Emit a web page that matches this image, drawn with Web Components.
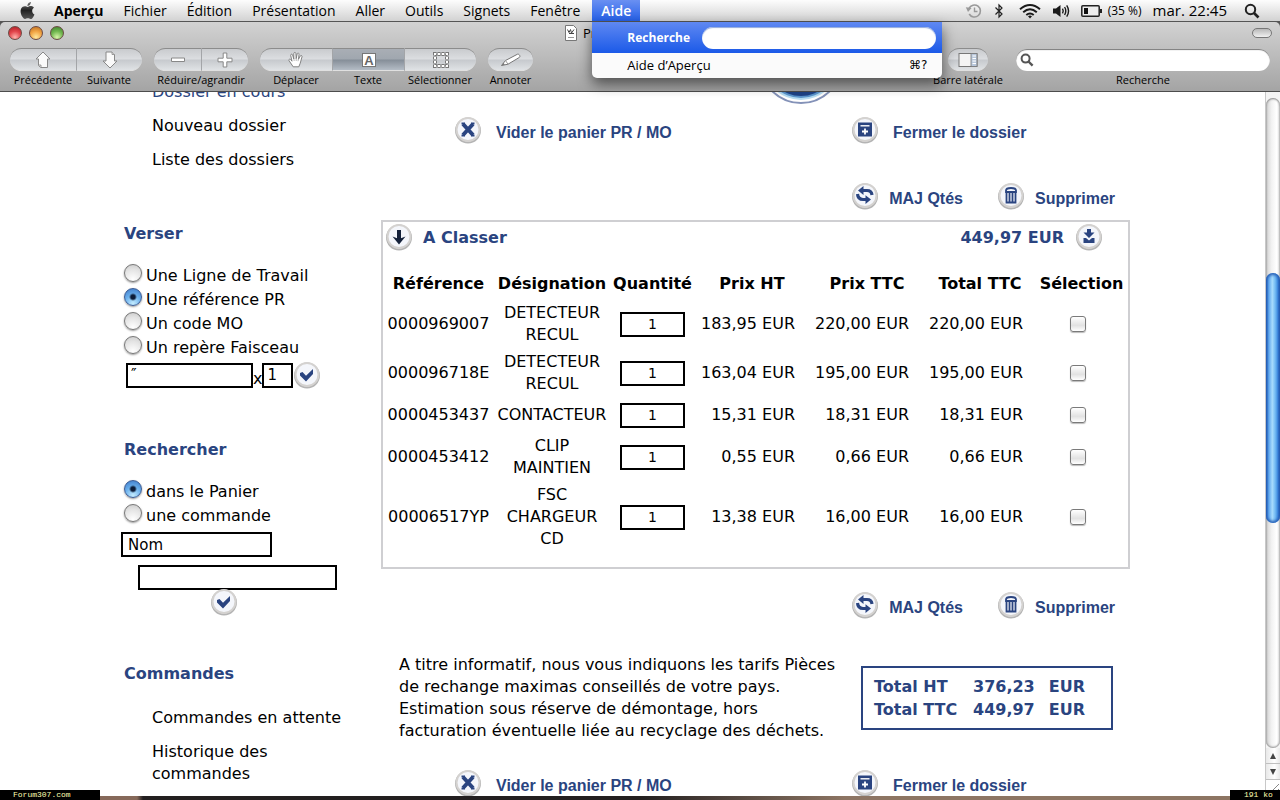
<!DOCTYPE html>
<html lang="fr">
<head>
<meta charset="utf-8">
<meta name="viewport" content="width=device-width, initial-scale=1">
<title>Aperçu</title>
<style>
  html, body { height: 100%; margin: 0; }

  body {
    --navy: #2a4480;
    --ui: "Open Sans", "Noto Sans", sans-serif;
    --text: "DejaVu Sans", sans-serif;
    background: #ffffff;
    color: #000000;
    font-family: var( --text );
    overflow: hidden;
  }
</style>
</head>
<body>
<preview-app></preview-app>

<script>
  // Name: [viewBox width, viewBox height, markup]
  const ICONS = {
    apple: [24, 24, `<defs><linearGradient id="g" x1="0" y1="0" x2="0" y2="1"><stop offset="0" stop-color="#777"/><stop offset=".5" stop-color="#222"/><stop offset="1" stop-color="#555"/></linearGradient></defs><path fill="url(#g)" d="M12.152 6.896c-.948 0-2.415-1.078-3.96-1.04-2.04.027-3.91 1.183-4.961 3.014-2.117 3.675-.546 9.103 1.519 12.09 1.013 1.454 2.208 3.09 3.792 3.039 1.52-.065 2.09-.987 3.935-.987 1.831 0 2.35.987 3.96.948 1.637-.026 2.676-1.48 3.676-2.948 1.156-1.688 1.636-3.325 1.662-3.415-.039-.013-3.182-1.221-3.22-4.857-.026-3.04 2.48-4.494 2.597-4.559-1.429-2.09-3.623-2.324-4.39-2.376-2-.156-3.675 1.09-4.61 1.09zM15.53 3.83c.843-1.012 1.4-2.427 1.245-3.83-1.207.052-2.662.805-3.532 1.818-.78.896-1.454 2.338-1.273 3.714 1.338.104 2.715-.688 3.559-1.701"/>`],
    history: [18, 16, `<path fill="none" stroke="#999" stroke-width="1.6" d="M4 5.4A6 6 0 1 1 4.2 11"/><path fill="#999" d="M.8 4.2 6.6 5 3 9z"/><path fill="none" stroke="#999" stroke-width="1.4" d="M9.5 4.5V8.5H12.5"/>`],
    bluetooth: [10, 16, `<path fill="none" stroke="#222" stroke-width="1.2" d="M1.5 4.5 8 11 5 14V2L8 5 1.5 11.5"/>`],
    wifi: [22, 16, `<g fill="none" stroke="#1a1a1a" stroke-width="2"><path d="M1 6.2Q11-2.2 21 6.2"/><path d="M4.2 9.2Q11 3.4 17.8 9.2"/><path d="M7.3 12Q11 9 14.7 12"/></g><path fill="#1a1a1a" d="M9 13.2Q11 11.6 13 13.2L11 15.6z"/>`],
    volume: [18, 16, `<path fill="#1a1a1a" d="M1 5.5H4L8.5 2V14L4 10.5H1z"/><g fill="none" stroke="#1a1a1a" stroke-width="1.4"><path d="M10.5 5.6Q12 8 10.5 10.4"/><path d="M12.6 4Q15 8 12.6 12"/><path d="M14.7 2.4Q18.4 8 14.7 13.6"/></g>`],
    battery: [22, 12, `<rect x=".8" y=".8" width="17.4" height="10.4" rx="1" fill="#eee" stroke="#222" stroke-width="1.5"/><rect x="3" y="3" width="4" height="6" fill="#111"/><path fill="#222" d="M19 4H21V8H19z"/>`],
    spotlight: [16, 16, `<circle cx="6.5" cy="6.5" r="4.7" fill="none" stroke="#222" stroke-width="2"/><path stroke="#222" stroke-width="2.6" d="M10 10 14.5 14.5"/>`],
    search: [14, 14, `<circle cx="5.6" cy="5.6" r="4" fill="none" stroke="#555" stroke-width="2"/><path stroke="#555" stroke-width="2.4" d="M8.5 8.5 12.6 12.6"/>`],
    previous: [18, 18, `<path fill="#fafafa" stroke="#888" d="M9 1 16 8H13.5V16.5H6.5L4.5 14.5V8H2z"/><path fill="#ddd" stroke="#888" stroke-width=".8" d="M4.5 14H7V16.5"/>`],
    next: [18, 18, `<path fill="#fafafa" stroke="#888" d="M5 1H11L13.5 3.5V10H16L9 17 2 10H5z"/><path fill="#ddd" stroke="#888" stroke-width=".8" d="M11 1V3.5H13.5"/>`],
    minus: [18, 18, `<path fill="#fff" stroke="#888" d="M2.5 7H15.5V10.5H2.5z"/>`],
    plus: [18, 18, `<path fill="#fff" stroke="#888" d="M7.2 2H10.8V7.2H16V10.8H10.8V16H7.2V10.8H2V7.2H7.2z"/>`],
    hand: [18, 18, `<path fill="#fff" stroke="#777" stroke-width=".9" stroke-linejoin="round" d="M6.2 15.8 2 9.6C1.3 8.4 2.9 7.6 3.8 8.7L5 10.2 3.7 4.4C3.6 3 5.2 2.7 5.6 4L6.8 8 6.8 2.6C6.8 1.1 8.8 1.1 8.9 2.5L9.2 7.6 10.2 2.8C10.5 1.6 12.2 2 12 3.4L11.5 8.2 13.3 4.9C14 3.9 15.4 4.6 15 5.8L13.2 12.3 11.8 15.8z"/><path fill="none" stroke="#999" stroke-width=".7" d="M6.8 7.5 7.2 10M9.2 7V10M11.5 7.8 11 10.2"/>`],
    text: [18, 18, `<rect x="2.5" y="2.5" width="13" height="13" fill="#fff" stroke="#777"/><text x="9" y="13.5" text-anchor="middle" font-family="Liberation Sans" font-size="13" font-weight="700" fill="#666">A</text>`],
    select: [18, 18, `<rect x="3" y="3" width="12" height="12" fill="none" stroke="#777" stroke-width="4" stroke-dasharray="3.2 .8" stroke-dashoffset="1.6"/><rect x="3" y="3" width="12" height="12" fill="none" stroke="#fff" stroke-width="2" stroke-dasharray="2.2 1.8" stroke-dashoffset="1.1"/>`],
    pencil: [22, 18, `<path fill="#fff" stroke="#777" stroke-linejoin="round" d="M1.5 14.5 5.5 9.5 17.5 3.2C19 2.6 20.8 5.4 19.4 6.4L8 13.2z"/><path fill="#777" d="M1.5 14.5 3.6 11.8 4.8 13.8z"/><path stroke="#999" d="M5.5 9.5 8 13.2"/>`],
    sidebar: [20, 16, `<rect x="1" y="1.5" width="18" height="13" fill="#f4f4f4" stroke="#777"/><path fill="#b9c8dc" stroke="#777" stroke-width=".8" d="M13 1.5H19V14.5H13z"/><path stroke="#fff" d="M14.5 4H18M14.5 6.5H18M14.5 9H18M14.5 11.5H18"/>`],
    document: [12, 16, `<path fill="#fff" stroke="#777" d="M.5.5H8.5L11.5 3.5V15.5H.5z"/><path fill="none" stroke="#444" d="M2.5 4.5 4 7.5 5.5 4.5 6.5 8 9 4.5M9 8.5H4"/><path stroke="#999" d="M3 12.5H9"/>`],
    clear: [28, 28, `<path stroke-width="4" d="M9 8 19 19M19 8 9 19"/><path stroke-width="2" d="M7.5 7.5H11M17 7.5H20.5M7.5 19.5H11M17 19.5H20.5"/>`],
    archive: [28, 28, `<path fill="var( --navy )" stroke="none" d="M7 6.5H21V20.5H7z"/><path stroke="#fff" stroke-width="1.4" d="M9.5 9.8H18.5"/><path stroke="#fff" stroke-width="1.8" d="M14 12.5V18.5M11 15.5H17"/>`],
    update: [28, 28, `<path stroke-width="3.2" d="M11 8.5H16Q20.5 8.5 21 13"/><path stroke-width="3.2" d="M6.5 12Q7 17.5 12 17.5H15"/><path fill="var( --navy )" stroke="none" d="M12.5 4V13L7 8.5zM14.5 13.2V22L20 17.6z"/>`],
    trash: [28, 28, `<path stroke-width="1.8" d="M9 8.5Q9 6 14 6Q19 6 19 8.5V10H9zM9.5 10.5V20.5H18.5V10.5M12.5 11V19.5M15.5 11V19.5"/>`],
    down: [28, 28, `<path stroke="#14213a" stroke-width="4" d="M14 7V16"/><path fill="#14213a" stroke="none" d="M7.5 13.5 14 21.5 20.5 13.5 14 16z"/>`],
    download: [28, 28, `<path fill="var( --navy )" stroke="none" d="M12 6H16V9.5H19.5L14 15 8.5 9.5H12zM8.5 15H11L14 17.5 17 15H19.5V20H8.5z"/>`],
    check: [28, 28, `<path fill="var( --navy )" stroke="none" d="M7 12 9.5 11 13 14.8 20 8V13L13 20.5 7 14.5z"/>`]
  };

  function define( name, html, setup ) {
    const template = document.createElement( 'template' );
    template.innerHTML = html;

    window.customElements.define( name, class extends HTMLElement {
      constructor() {
        super();

        // Root
        this.attachShadow( {mode: 'open'} );
        this.shadowRoot.appendChild( template.content.cloneNode( true ) );
      }

      // Watched attributes
      static get observedAttributes() {
        return ['name'];
      }

      // Setup
      connectedCallback() {
        if( setup ) setup( this, this.shadowRoot );
      }

      // Observed attribute has changed
      attributeChangedCallback() {
        if( setup ) setup( this, this.shadowRoot );
      }
    } );
  }

  // Icon
  // Size follows the drawing unless width is given
  define( 'app-icon', /* template */ `
    <style>
      :host { display: inline-flex; flex: none; }
      svg { display: block; }
    </style>
    <span></span>
  `, ( host, root ) => {
    if( !host.hasAttribute( 'name' ) ) return;

    const [width, height, markup] = ICONS[host.getAttribute( 'name' )];
    const drawn = parseInt( host.getAttribute( 'width' ) || width );
    root.querySelector( 'span' ).innerHTML =
      `<svg aria-hidden="true" width="${drawn}" height="${Math.round( drawn * height / width )}" viewBox="0 0 ${width} ${height}">${markup}</svg>`;
  } );

  // Round badge behind the page icons
  define( 'round-icon', /* template */ `
    <style>
      :host { display: inline-flex; flex: none; }
      svg { display: block; fill: none; stroke: var( --navy ); }
    </style>
    <span></span>
  `, ( host, root ) => {
    if( !host.hasAttribute( 'name' ) ) return;

    root.querySelector( 'span' ).innerHTML = `
      <svg aria-hidden="true" width="28" height="28" viewBox="0 0 28 28">
        <circle cx="14" cy="14.5" r="12" fill="#fff" stroke="#b4b4b4" stroke-width="2"/>
        <circle cx="14" cy="13.5" r="11.5" fill="#f4f6fb" stroke="#d4d2d0" stroke-width="2"/>
        ${ICONS[host.getAttribute( 'name' )][2]}
      </svg>`;
  } );

  define( 'action-button', /* template */ `
    <style>
      :host { display: block; }
      button {
        align-items: center;
        background: none;
        border: 0;
        color: var( --navy );
        display: flex;
        font: 700 16px/22px "Liberation Sans", sans-serif;
        gap: var( --gap, 10px );
        padding: 0;
        white-space: nowrap;
      }
      span { margin-top: 6px; }
    </style>
    <button type="button"><round-icon></round-icon><span><slot></slot></span></button>
  `, ( host, root ) => {
    root.querySelector( 'round-icon' ).setAttribute( 'name', host.getAttribute( 'icon' ) );
  } );

  define( 'help-menu', /* template */ `
    <style>
      :host {
        background: #fbfbfb;
        border-radius: 0 0 5px 5px;
        box-shadow: 0 6px 14px rgba( 0, 0, 0, 0.55 );
        box-sizing: border-box;
        color: #000000;
        display: block;
        font: 13px/18px var( --ui );
        width: 350px;
      }
      label {
        align-items: center;
        background: linear-gradient( #5f88f2, #1b5ae8 );
        color: #ffffff;
        display: flex;
        font-weight: 700;
        font-size: 12px;
        gap: 12px;
        height: 31px;
        padding: 0 6px 0 35px;
      }
      input {
        background: #ffffff;
        border: 0;
        border-radius: 11px;
        box-shadow: inset 0 1px 1px #90a8dc;
        box-sizing: border-box;
        flex: 1;
        height: 22px;
        min-width: 0;
        outline: 0;
        padding: 0 10px;
      }
      a {
        color: inherit;
        display: flex;
        justify-content: space-between;
        padding: 3px 15px 4px 35px;
        text-decoration: none;
      }
      kbd { font: 12px/18px "DejaVu Sans", sans-serif; }
    </style>
    <label>Recherche <input type="text"></label>
    <a href="#aide">Aide d’Aperçu <kbd>⌘?</kbd></a>
  ` );

  define( 'menu-bar', /* template */ `
    <style>
      :host {
        align-items: stretch;
        background: linear-gradient( #fdfdfd, #d2d2d2 );
        border-bottom: 1px solid #555555;
        box-sizing: border-box;
        display: flex;
        font: 14px/21px var( --ui );
        height: 22px;
        justify-content: space-between;
        position: relative;
        z-index: 2;
      }
      nav, .status { align-items: center; display: flex; }
      nav { padding-left: 19px; }
      nav > a { color: inherit; padding: 0 10px; text-decoration: none; }
      nav > .mark { display: flex; padding: 0 8px 0 0; }
      .app { font-weight: 700; }
      .open {
        background: linear-gradient( #6a90f2, #2560e8 );
        color: #ffffff;
        font-weight: 600;
        margin-left: 2px;
        position: relative;
      }
      .open > a { color: inherit; display: block; padding: 0 9px; text-decoration: none; }
      help-menu { left: 0; position: absolute; top: 22px; }
      .status { gap: 11px; padding-right: 20px; }
      .status [name=bluetooth] { margin-right: 4px; }
      .charge { align-items: center; display: flex; font-size: 12px; gap: 5px; }
      time { font-size: 15px; margin-right: 6px; }
    </style>
    <nav>
      <a class="mark" href="#apple" aria-label="Menu Apple"><app-icon name="apple" width="17"></app-icon></a>
      <a class="app" href="#apercu">Aperçu</a>
      <a href="#fichier">Fichier</a>
      <a href="#edition">Édition</a>
      <a href="#presentation">Présentation</a>
      <a href="#aller">Aller</a>
      <a href="#outils">Outils</a>
      <a href="#signets">Signets</a>
      <a href="#fenetre">Fenêtre</a>
      <div class="open"><a href="#aide">Aide</a><help-menu></help-menu></div>
    </nav>
    <div class="status">
      <app-icon name="history"></app-icon>
      <app-icon name="bluetooth"></app-icon>
      <app-icon name="wifi"></app-icon>
      <app-icon name="volume"></app-icon>
      <span class="charge"><app-icon name="battery"></app-icon>(35 %)</span>
      <time>mar. 22:45</time>
      <app-icon name="spotlight"></app-icon>
    </div>
  ` );

  define( 'tool-button', /* template */ `
    <style>
      :host { display: block; flex: none; width: var( --segment ); }
      button {
        align-items: center;
        background: none;
        border: 0;
        color: inherit;
        display: flex;
        flex-direction: column;
        font: inherit;
        padding: 0;
        width: 100%;
      }
      .face {
        align-items: center;
        background: linear-gradient( #c9cbce, #dcdee1 48%, #c6c9cd 52%, #dfe2e5 );
        border-bottom: 1px solid #e0e0e0;
        border-top: 1px solid #8c8c8c;
        box-sizing: border-box;
        display: flex;
        height: 23px;
        justify-content: center;
        width: 100%;
      }
      :host( [first] ) .face { border-radius: 12px 0 0 12px; }
      :host( [last] ) .face { border-radius: 0 12px 12px 0; }
      :host( [first][last] ) .face { border-radius: 12px; }
      :host( :not( [first] ) ) .face { border-left: 1px solid #a3a5a8; }
      :host( [active] ) .face { background: linear-gradient( #a9aeb5, #a0a7af 48%, #858e98 52%, #b4bcc5 ); }
      .label { line-height: 18px; white-space: nowrap; }
    </style>
    <button type="button">
      <span class="face"><app-icon></app-icon></span>
      <span class="label"><slot></slot></span>
    </button>
  `, ( host, root ) => {
    root.querySelector( 'app-icon' ).setAttribute( 'name', host.getAttribute( 'icon' ) );
    if( host.hasAttribute( 'name' ) ) {
      root.querySelector( 'button' ).setAttribute( 'aria-label', host.getAttribute( 'name' ) );
    }
  } );

  define( 'tool-group', /* template */ `
    <style>
      :host { display: block; }
      div { display: flex; justify-content: center; }
      p { line-height: 18px; margin: 0; text-align: center; white-space: nowrap; }
      p:empty { display: none; }
    </style>
    <div><slot></slot></div>
    <p></p>
  `, ( host, root ) => {
    root.querySelector( 'p' ).textContent = host.getAttribute( 'label' ) || '';
  } );

  define( 'window-header', /* template */ `
    <style>
      :host {
        background: linear-gradient( #d2d2d2, #a4a4a4 );
        border-bottom: 1px solid #4c4c4c;
        border-radius: 5px 5px 0 0;
        box-sizing: border-box;
        display: block;
        font: 11px/18px var( --ui );
        height: 70px;
      }
      .title {
        align-items: center;
        display: flex;
        height: 22px;
        justify-content: space-between;
        padding: 0 8px;
      }
      .lights { display: flex; flex: 1; gap: 7px; }
      .lights button {
        border: 1px solid #6b4a44;
        border-radius: 50%;
        box-sizing: border-box;
        height: 14px;
        padding: 0;
        width: 14px;
      }
      .close { background: radial-gradient( circle at 50% 85%, #ffb3ab, #e2454b 50%, #a81c22 ); }
      .minimise { background: radial-gradient( circle at 50% 85%, #ffe89c, #f2a545 50%, #b86a1c ); }
      .zoom { background: radial-gradient( circle at 50% 85%, #d8f5a8, #72b850 50%, #3a7a2a ); }
      h1 {
        align-items: center;
        display: flex;
        font: 13px/18px var( --ui );
        gap: 6px;
        margin: 0;
        width: 150px;
      }
      .right { display: flex; flex: 1; justify-content: flex-end; }
      .pill {
        background: linear-gradient( #b8b8b8, #f0f0f0 );
        border: 1px solid #777777;
        border-radius: 6px;
        height: 10px;
        padding: 0;
        width: 20px;
      }
      .tools { display: flex; gap: 12px; padding: 4px 10px 0; }
      .side { margin-left: auto; width: 72px; }
      .search { text-align: center; width: 254px; }
      .field {
        align-items: center;
        background: #ffffff;
        border-radius: 11px;
        box-shadow: inset 0 1px 1px #777777;
        display: flex;
        height: 22px;
        margin: 1px 0 0;
        padding: 0 4px;
      }
      input { background: none; border: 0; flex: 1; min-width: 0; outline: 0; }
      label { display: block; }
    </style>
    <div class="title">
      <div class="lights">
        <button class="close" aria-label="Fermer"></button>
        <button class="minimise" aria-label="Réduire"></button>
        <button class="zoom" aria-label="Agrandir"></button>
      </div>
      <h1><app-icon name="document"></app-icon>Pr</h1>
      <div class="right"><button class="pill" aria-label="Barre d’outils"></button></div>
    </div>
    <div class="tools">
      <tool-group style="--segment: 66px">
        <tool-button first icon="previous">Précédente</tool-button>
        <tool-button last icon="next">Suivante</tool-button>
      </tool-group>
      <tool-group style="--segment: 47px" label="Réduire/agrandir">
        <tool-button first icon="minus" name="Réduire"></tool-button>
        <tool-button last icon="plus" name="Agrandir"></tool-button>
      </tool-group>
      <tool-group style="--segment: 72px">
        <tool-button first icon="hand">Déplacer</tool-button>
        <tool-button active icon="text">Texte</tool-button>
        <tool-button last icon="select">Sélectionner</tool-button>
      </tool-group>
      <tool-group style="--segment: 45px">
        <tool-button first last icon="pencil">Annoter</tool-button>
      </tool-group>
      <tool-group class="side" style="--segment: 40px" label="Barre latérale">
        <tool-button first last icon="sidebar" name="Barre latérale"></tool-button>
      </tool-group>
      <div class="search">
        <div class="field"><app-icon name="search"></app-icon><input id="search" type="text"></div>
        <label for="search">Recherche</label>
      </div>
    </div>
  ` );

  define( 'side-bar', /* template */ `
    <style>
      :host {
        box-sizing: border-box;
        display: block;
        flex: none;
        font-size: 16px;
        line-height: 22px;
        margin-top: -17px;
        padding-left: 121px;
        width: 381px;
      }
      ul { list-style: none; margin: 0; padding: 0 0 0 31px; }
      li { padding: 6px 0; width: 200px; }
      a { color: inherit; text-decoration: none; }
      .current, h2 { color: var( --navy ); }
      h2 { font-size: 16px; line-height: 22px; margin: 0 0 0 3px; }
      .pour { margin-top: 46px; }
      .find { margin-top: 49px; }
      .orders { margin-top: 47px; }
      .orders + ul { margin-top: 16px; }
      fieldset { border: 0; margin: 19px 0 0 3px; min-width: 0; padding: 0; }
      fieldset label { align-items: center; display: flex; gap: 4px; height: 24px; }
      input[type=radio] {
        appearance: none;
        background: radial-gradient( circle at 50% 90%, #ffffff, #e4e4e4 60%, #c8c8c8 );
        border: 1px solid #777777;
        border-radius: 50%;
        box-shadow: 0 1px 2px #999999;
        height: 18px;
        margin: 0 0 6px;
        width: 18px;
      }
      input[type=radio]:checked {
        background:
          radial-gradient( circle, #0c1c38 0 2px, transparent 4px ),
          radial-gradient( circle at 50% 90%, #c4ecff, #6bb0ec 50%, #3b78c8 );
        border-color: #3c5c94;
      }
      input[type=text], select {
        appearance: none;
        background: #ffffff;
        border: 2px solid #000000;
        border-radius: 0;
        box-sizing: border-box;
        color: #000000;
        display: block;
        font: 15px/20px var( --text );
        height: 25px;
        margin: 0;
        padding: 0 3px;
      }
      .entry { align-items: center; display: flex; margin: 0 0 0 5px; }
      .entry .code { width: 127px; }
      .entry .count { width: 31px; }
      .times { margin-top: 8px; }
      select.field { margin-top: 4px; padding: 0 5px; width: 151px; }
      input.query { margin: 8px 0 0 17px; width: 199px; }
      .round { background: none; border: 0; display: block; height: 28px; padding: 0; }
      .round.go { margin: -2px 0 0 89px; }
    </style>
    <ul>
      <li><a class="current" href="#cours">Dossier en cours</a></li>
      <li><a href="#nouveau">Nouveau dossier</a></li>
      <li><a href="#liste">Liste des dossiers</a></li>
    </ul>
    <h2 class="pour">Verser</h2>
    <fieldset aria-label="Verser">
      <label><input type="radio" name="pour">Une Ligne de Travail</label>
      <label><input type="radio" name="pour" checked>Une référence PR</label>
      <label><input type="radio" name="pour">Un code MO</label>
      <label><input type="radio" name="pour">Un repère Faisceau</label>
    </fieldset>
    <div class="entry">
      <input class="code" type="text" value="″" aria-label="Référence">
      <span class="times">x</span>
      <input class="count" type="text" value="1" aria-label="Quantité">
      <button class="round" aria-label="Verser"><round-icon name="check"></round-icon></button>
    </div>
    <h2 class="find">Rechercher</h2>
    <fieldset aria-label="Rechercher">
      <label><input type="radio" name="find" checked>dans le Panier</label>
      <label><input type="radio" name="find">une commande</label>
    </fieldset>
    <select class="field" aria-label="Critère"><option>Nom</option></select>
    <input class="query" type="text" aria-label="Recherche">
    <button class="round go" aria-label="Rechercher"><round-icon name="check"></round-icon></button>
    <h2 class="orders">Commandes</h2>
    <ul>
      <li><a href="#attente">Commandes en attente</a></li>
      <li><a href="#historique">Historique des commandes</a></li>
    </ul>
  ` );

  const PARTS = [
    ['0000969007', 'DETECTEUR RECUL', '183,95', '220,00', '220,00'],
    ['000096718E', 'DETECTEUR RECUL', '163,04', '195,00', '195,00'],
    ['0000453437', 'CONTACTEUR', '15,31', '18,31', '18,31'],
    ['0000453412', 'CLIP MAINTIEN', '0,55', '0,66', '0,66'],
    ['00006517YP', 'FSC CHARGEUR CD', '13,38', '16,00', '16,00']
  ];

  define( 'cart-panel', /* template */ `
    <style>
      :host {
        border: 2px solid #cfcfd2;
        box-sizing: border-box;
        display: block;
        font-size: 16px;
        line-height: 22px;
        padding: 1px 1px 14px;
      }
      header { align-items: center; color: var( --navy ); display: flex; font-weight: 700; padding: 0 24px 0 1px; }
      header button { background: none; border: 0; display: block; height: 28px; padding: 0; }
      h2 { flex: 1; font-size: inherit; margin: 0 0 0 10px; padding-top: 2px; }
      header span { margin-right: 11px; padding-top: 2px; }
      table { border-collapse: collapse; margin-top: 17px; table-layout: fixed; width: 100%; }
      th { padding: 5px 0; white-space: nowrap; }
      td { height: 30px; padding: 2px 0 3px; text-align: center; }
      td.price { padding-right: 15px; text-align: right; white-space: nowrap; }
      td.total { padding-right: 13px; }
      .quantity {
        background: #ffffff;
        border: 2px solid #000000;
        box-sizing: border-box;
        display: block;
        font: 14px/20px var( --text );
        height: 25px;
        margin: 0 auto;
        padding: 0;
        text-align: center;
        width: 65px;
      }
      .pick {
        appearance: none;
        background: linear-gradient( #ffffff, #e2e2e2 60%, #ffffff );
        border: 1px solid #7a7a7a;
        border-radius: 3px;
        box-shadow: 0 1px 1px #bbbbbb;
        box-sizing: border-box;
        display: block;
        height: 16px;
        margin: 0 0 0 34px;
        width: 16px;
      }
    </style>
    <header>
      <button aria-label="Replier"><round-icon name="down"></round-icon></button>
      <h2>A Classer</h2>
      <span>449,97 EUR</span>
      <button aria-label="Télécharger"><round-icon name="download"></round-icon></button>
    </header>
    <table>
      <colgroup>
        <col style="width: 109px"><col style="width: 118px"><col style="width: 83px">
        <col style="width: 116px"><col style="width: 114px"><col style="width: 112px"><col>
      </colgroup>
      <thead>
        <tr>
          <th>Référence</th><th>Désignation</th><th>Quantité</th><th>Prix HT</th>
          <th>Prix TTC</th><th>Total TTC</th><th>Sélection</th>
        </tr>
      </thead>
      <tbody></tbody>
    </table>
  `, ( host, root ) => {
    root.querySelector( 'tbody' ).innerHTML = PARTS.map( ( [code, name, net, gross, total] ) => `
      <tr>
        <td>${code}</td>
        <td>${name.split( ' ' ).join( '<br>' )}</td>
        <td><input class="quantity" type="text" value="1" aria-label="Quantité ${code}"></td>
        <td class="price">${net} EUR</td>
        <td class="price">${gross} EUR</td>
        <td class="price total">${total} EUR</td>
        <td><input class="pick" type="checkbox" aria-label="Sélection ${code}"></td>
      </tr>` ).join( '' );
  } );

  define( 'cart-totals', /* template */ `
    <style>
      :host {
        border: 2px solid var( --navy );
        box-sizing: border-box;
        color: var( --navy );
        display: block;
        font: 700 16px/23px var( --text );
        height: 64px;
        padding: 7px 11px;
        width: 252px;
      }
      dl { display: grid; grid-template-columns: 99px 1fr; margin: 0; }
      dd { display: flex; gap: 14px; margin: 0; }
    </style>
    <dl>
      <dt>Total HT</dt><dd><span>376,23</span> <span>EUR</span></dd>
      <dt>Total TTC</dt><dd><span>449,97</span> <span>EUR</span></dd>
    </dl>
  ` );

  define( 'cart-page', /* template */ `
    <style>
      :host { display: block; flex: 0 1 749px; min-width: 0; }
      .orb { display: block; margin-left: 390px; }
      .folder {
        --gap: 14px;
        display: grid;
        grid-template-columns: 397px 1fr;
        margin-top: 12px;
        padding-left: 73px;
      }
      .edit { display: flex; gap: 34px; justify-content: flex-end; margin-top: 38px; padding-right: 15px; }
      cart-panel { margin-top: 10px; }
      cart-panel + .edit { margin-top: 22px; }
      .notice { align-items: flex-start; display: flex; gap: 6px; margin-top: 35px; padding-left: 18px; }
      p { flex: 0 1 456px; font-size: 16px; line-height: 22px; margin: 0; }
      cart-totals { margin-top: 12px; }
      .notice + .folder { margin-top: 27px; }
    </style>
    <svg class="orb" width="60" height="12" viewBox="0 0 60 12" aria-hidden="true">
      <circle cx="30" cy="-30" r="41" fill="#fff" stroke="#8492b8" stroke-width="2"/>
      <circle cx="30" cy="-30" r="38" fill="#b5dcf2"/>
      <circle cx="30" cy="-30" r="36" fill="#5a94cc"/>
      <circle cx="30" cy="-30" r="34" fill="#1d4286"/>
    </svg>
    <div class="folder">
      <action-button icon="clear">Vider le panier PR / MO</action-button>
      <action-button icon="archive">Fermer le dossier</action-button>
    </div>
    <div class="edit">
      <action-button icon="update">MAJ Qtés</action-button>
      <action-button icon="trash">Supprimer</action-button>
    </div>
    <cart-panel></cart-panel>
    <div class="edit">
      <action-button icon="update">MAJ Qtés</action-button>
      <action-button icon="trash">Supprimer</action-button>
    </div>
    <div class="notice">
      <p>A titre informatif, nous vous indiquons les tarifs Pièces de rechange maximas conseillés de votre pays.<br>Estimation sous réserve de démontage, hors<br>facturation éventuelle liée au recyclage des déchets.</p>
      <cart-totals></cart-totals>
    </div>
    <div class="folder">
      <action-button icon="clear">Vider le panier PR / MO</action-button>
      <action-button icon="archive">Fermer le dossier</action-button>
    </div>
  ` );

  define( 'scroll-track', /* template */ `
    <style>
      :host {
        background: #f4f4f4;
        border-left: 1px solid #c8c8c8;
        box-sizing: border-box;
        display: flex;
        flex: none;
        flex-direction: column;
        width: 15px;
      }
      .track {
        background: linear-gradient( 90deg, #d0d0d0, #f2f2f2 40%, #ffffff 75%, #e6e6e6 );
        border-radius: 8px;
        box-shadow: inset 0 1px 2px #888888, inset 0 -1px 2px #999999;
        display: flex;
        flex: 1;
        flex-direction: column;
        margin-top: 6px;
      }
      .before { flex: 175; }
      .thumb {
        background: linear-gradient( 90deg, #1c4fa8, #5aa2ec 18%, #a8dcfc 45%, #74bcf4 65%, #3c86dc 85%, #1c50a4 );
        border-radius: 7px;
        box-shadow: inset 0 2px 3px #2a62b8, inset 0 -2px 3px #2a62b8;
        flex: 251;
      }
      .after { flex: 225; }
      button {
        align-items: center;
        background: linear-gradient( 90deg, #e8e8e8, #ffffff 60%, #e8e8e8 );
        border: 0;
        border-bottom: 1px solid #c0c0c0;
        display: flex;
        height: 16px;
        justify-content: center;
        padding: 0;
      }
      .corner { background: #ffffff; display: block; }
    </style>
    <div class="track"><div class="before"></div><div class="thumb"></div><div class="after"></div></div>
    <button aria-label="Monter"><svg width="8" height="8"><path fill="#444" d="M4 1 7 7H1z"/></svg></button>
    <button aria-label="Descendre"><svg width="8" height="8"><path fill="#444" d="M4 7 7 1H1z"/></svg></button>
    <svg class="corner" width="14" height="16"><path stroke="#888" d="M3 14 13 4M8 14 13 9"/></svg>
  ` );

  define( 'desktop-edge', /* template */ `
    <style>
      :host {
        background: linear-gradient( 90deg, #86695a 137px, #231f20 143px 50%, #8d7563 66% );
        color: #ffffb0;
        display: block;
        flex: none;
        font: 8px/10px "Liberation Mono", monospace;
        height: 4px;
        position: relative;
      }
      span { background: #000000; bottom: 0; box-sizing: border-box; position: absolute; }
      .site { left: 0; padding-left: 13px; width: 100px; }
      .size { padding-left: 14px; right: 0; width: 50px; }
    </style>
    <span class="site">Forum307.com</span>
    <span class="size">191 ko</span>
  ` );

  define( 'preview-app', /* template */ `
    <style>
      :host { background: #555555; display: flex; flex-direction: column; height: 100vh; }
      menu-bar, window-header { flex: none; }
      .view { background: #ffffff; display: flex; flex: 1; min-height: 0; }
      .document { display: flex; flex: 1; min-width: 0; overflow: hidden; }
    </style>
    <menu-bar></menu-bar>
    <window-header></window-header>
    <div class="view">
      <main class="document"><side-bar></side-bar><cart-page></cart-page></main>
      <scroll-track></scroll-track>
    </div>
    <desktop-edge></desktop-edge>
  ` );
</script>
</body>
</html>
